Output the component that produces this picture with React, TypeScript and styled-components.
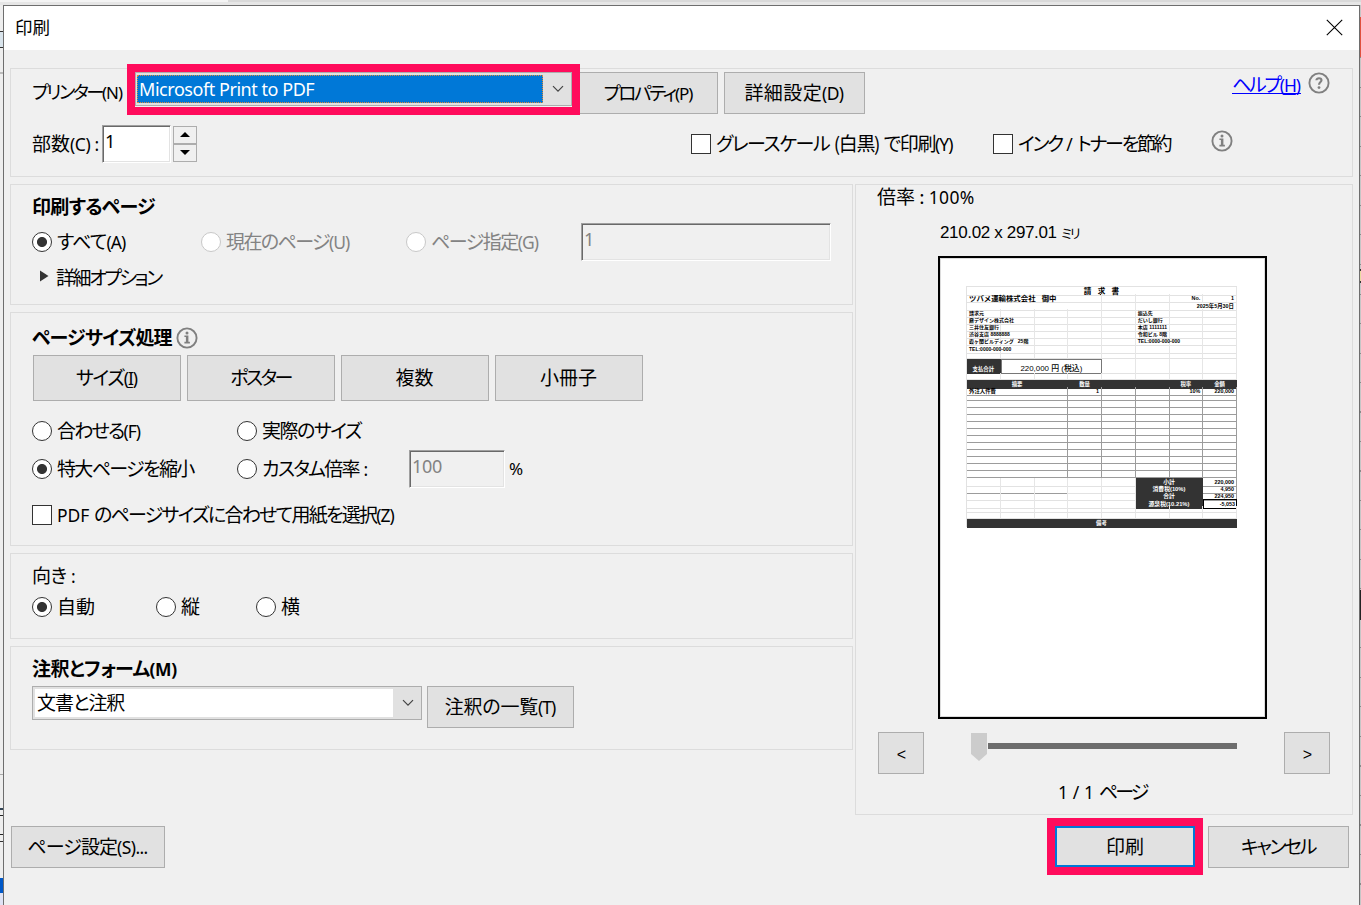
import React from "react";
import styled, { createGlobalStyle, css } from "styled-components";

const Global = createGlobalStyle`
  * { box-sizing: border-box; }
  body { margin: 0; background: #e9e9e9; overflow: hidden; }
  #root { height: 905px; }
`;

const ui = `"Noto Sans", "Noto Sans CJK JP", sans-serif`;
const cjk = `"Noto Sans CJK JP", "Noto Sans", sans-serif`;

const Screen = styled.div`
  width: 1361px;
  height: 905px;
  overflow: hidden;
  display: grid;
  grid-template-columns: 3px 1357px 1px;
  grid-template-rows: 5px 900px;
  background: #ededed;
  font: 19px/24px ${cjk};
  color: #000;
`;
const TopStrip = styled.div`
  grid-column: 1 / -1;
  background: linear-gradient(90deg, #f4f4f4 228px, #d9d9d9 228px);
  height: 5px;
  border-bottom: 3px solid #e6e6e6;
`;
const LeftStrip = styled.div`
  background: linear-gradient(
    #eee 26px, #333 26px 27px, #d9e4ec 27px 42px, #333 42px 43px, #eee 43px 67px, #bbb 67px 69px,
    #eee 69px 769px, #aaa 769px 770px, #eee 770px 803px, #345 803px 805px, #eee 805px 810px,
    #222 810px 811px, #eee 811px 829px, #222 829px 830px, #eee 830px 836px,
    #333 836px 837px, #eee 837px 873px, #0058c8 873px 888px, #dfe3f5 888px 899px
  );
`;
const RightStrip = styled.div`
  background:
    linear-gradient(transparent 12px, #e0503e 12px 52px, transparent 52px 264px, #333 264px 266px, #e8d9a0 266px 276px, #333 276px 278px, transparent 278px 585px, #222 585px 615px, transparent 615px),
    repeating-linear-gradient(#c6c6c6 0 23px, #8a8a8a 23px 24px, #c6c6c6 24px 29.5px);
`;
const Dialog = styled.section`
  border: 1px solid #6e6e6e;
  border-bottom: 0;
  background: #f0f0f0;
  display: flex;
  flex-direction: column;
`;
const TitleBar = styled.header`
  height: 44px;
  background: #fff;
  display: flex;
  align-items: center;
  justify-content: space-between;
  padding: 0 16px 1px 11px;
`;
const Body = styled.div`
  padding: 18px 6px 0;
`;
const Group = styled.section<{ $h: number }>`
  height: ${(p) => p.$h}px;
  border: 1px solid #dcdcdc;
  padding-left: 21px;
  margin-bottom: 7px;
`;
const Columns = styled.div`
  display: grid;
  grid-template-columns: 843px 498px;
  column-gap: 2px;
`;
const Row = styled.div<{ $h: number; $mt?: number }>`
  height: ${(p) => p.$h}px;
  margin-top: ${(p) => p.$mt ?? 0}px;
  display: flex;
  align-items: center;
`;
const Label = styled.span<{ $w?: number; $ls?: number; $bold?: boolean; $dim?: boolean; $size?: number }>`
  flex: none;
  width: ${(p) => (p.$w ? p.$w + "px" : "auto")};
  padding-bottom: 2px;
  white-space: pre;
  font-size: ${(p) => p.$size ?? 19}px;
  font-weight: ${(p) => (p.$bold ? 700 : 400)};
  font-family: ${cjk};
  font-feature-settings: "palt";
  letter-spacing: ${(p) => p.$ls ?? 0}px;
  color: ${(p) => (p.$dim ? "#838383" : "inherit")};
`;
const Latin = styled.span<{ $ls?: number }>`
  font-family: ${ui};
  font-size: 0.92em;
  letter-spacing: ${(p) => p.$ls ?? -1}px;
`;
const Button = styled.button<{ $w: number; $h?: number; $ml?: number }>`
  flex: none;
  width: ${(p) => p.$w}px;
  height: ${(p) => p.$h ?? 42}px;
  margin: 0 0 0 ${(p) => p.$ml ?? 0}px;
  padding: 0 1px 1px 0;
  border: 1px solid #adadad;
  border-radius: 0;
  background: #e1e1e1;
  color: #000;
  display: flex;
  align-items: center;
  justify-content: center;
`;
const Highlight = styled.div<{ $w: number; $h: number; $ml?: number }>`
  flex: none;
  width: ${(p) => p.$w}px;
  height: ${(p) => p.$h}px;
  margin-left: ${(p) => p.$ml ?? 0}px;
  border: 8px solid #ff0c5c;
  background: #f0f0f0;
  z-index: 1;
`;
const PrintButton = styled(Button)`
  padding: 0;
  border: 2px solid #0078d7;
`;
const Combo = styled.div<{ $w: number; $inset?: number }>`
  width: ${(p) => p.$w}px;
  height: 34px;
  flex: none;
  border: 1px solid #adadad;
  background: #e1e1e1;
  display: grid;
  grid-template-columns: 1fr 28px;
  padding: 2px 0 2px ${(p) => p.$inset ?? 2}px;
`;
const ComboValue = styled.div<{ $active?: boolean }>`
  display: flex;
  align-items: center;
  padding-left: 2px;
  background: #fff;
  ${(p) => p.$active && css`
    background: #0078d7;
    color: #fff;
    font: 18px/24px ${ui};
    letter-spacing: -0.45px;
    outline: 1px dotted #e08a3a;
    outline-offset: -1px;
  `}
`;
const Drop = styled.div`
  display: flex;
  align-items: center;
  justify-content: center;
  padding-left: 2px;
`;
const Field = styled.div<{ $w: number; $ml?: number; $off?: boolean }>`
  flex: none;
  width: ${(p) => p.$w}px;
  height: 38px;
  margin-left: ${(p) => p.$ml ?? 0}px;
  border: 1px solid;
  border-color: #a0a0a0 #fff #fff #a0a0a0;
  box-shadow: inset 1px 1px #696969, inset -1px -1px #e3e3e3;
  background: ${(p) => (p.$off ? "#f0f0f0" : "#fff")};
  color: ${(p) => (p.$off ? "#838383" : "#000")};
  padding: 3px 0 0 2px;
  font: 18px/24px ${ui};
  letter-spacing: -0.3px;
`;
const Spinner = styled.div`
  margin-left: 2px;
  width: 24px;
  height: 36px;
  display: grid;
  grid-template-rows: 18px 18px;
`;
const SpinButton = styled.div`
  border: 1px solid #adadad;
  background: #f0f0f0;
  display: flex;
  align-items: center;
  justify-content: center;
  padding: 0 1px 1px 0;
`;
const Radio = styled.span<{ $on?: boolean; $dim?: boolean }>`
  flex: none;
  width: 20px;
  height: 20px;
  margin-right: 5px;
  border-radius: 50%;
  border: 1px solid ${(p) => (p.$dim ? "#c8c8c8" : "#333")};
  background: ${(p) => (p.$on ? "radial-gradient(circle, #333 4.6px, #fff 5.4px)" : "#fff")};
`;
const Check = styled.span`
  flex: none;
  width: 20px;
  height: 20px;
  margin-right: 5px;
  border: 1px solid #333;
  background: #fff;
`;
const HelpLink = styled.a`
  color: #0000ff;
  border-bottom: 1px solid #0000ff;
  line-height: 24px;
  height: 22px;
  width: 69px;
  margin-right: 7px;
`;
const HelpRow = styled.div`
  display: flex;
  margin: 8px 22px 0 auto;
  align-self: flex-start;
`;
const Key = styled.u`
  text-decoration: underline;
  text-decoration-thickness: 1px;
  text-underline-offset: 2px;
`;
/* Pushes its content down so that it lines up with the tall combo box. */
const Lowered = styled.div`
  display: flex;
  align-items: center;
  padding-top: 6px;
`;
const Raised = styled.div`
  display: flex;
  padding: 0 0 6px;
  margin-left: -1px;
`;
const Options = styled.div`
  display: flex;
  align-items: center;
  height: 38px;
  margin-left: 494px;
`;
const Disclosure = styled.svg`
  margin: -4px 7px 0 7px;
`;
const Percent = styled.span`
  font: 17px/24px ${ui};
  margin-left: 4px;
`;
const TopRow = styled.div`
  display: flex;
  align-items: flex-start;
  margin-top: 5px;
`;
const FooterWrap = styled.div`
  margin-top: 7px;
`;
const Footer = styled.footer`
  display: flex;
  align-items: flex-start;
  height: 57px;
  margin-top: -4px;
  padding-left: 1px;
`;
const FooterSlot = styled.div`
  padding-top: 8px;
`;

const Preview = styled.section`
  height: 631px;
  border: 1px solid #dcdcdc;
`;
const Scale = styled.div`
  display: flex;
  align-items: center;
  margin: 0 0 0 21px;
  height: 24px;
`;
const PageSize = styled.div`
  font: 17px/20px "Liberation Sans", ${cjk};
  margin: 14px 0 0 84px;
  height: 20px;
  white-space: pre;
  letter-spacing: -0.35px;
`;
const Mm = styled.span`
  font-size: 13px;
  font-feature-settings: "palt";
  letter-spacing: -1.8px;
`;
const Paper = styled.div`
  width: 329px;
  height: 463px;
  margin: 13px 0 0 82px;
  border: 2px solid #000;
  box-shadow: inset 0 0 0 1px #dcdcdc;
  background: #fff;
  padding: 28px 0 0 27px;
`;
const Pager = styled.div`
  display: flex;
  height: 42px;
  margin: 13px 22px 0;
`;
const Slider = styled.div`
  display: flex;
  margin: 1px 47px 0;
  width: 266px;
`;
const Track = styled.div`
  width: 249px;
  height: 6px;
  margin: 10px 0 0 1px;
  background: #6d6d6d;
`;
const Angle = styled.span`
  font: 16px/20px "Liberation Sans", sans-serif;
  padding: 5px 0 0 2px;
`;
const Count = styled.div`
  display: flex;
  align-items: center;
  margin: 6px 0 0 202px;
  height: 24px;
`;

const Sheet = styled.div`
  width: 271px;
  margin-left: -1px;
  border-left: 1px solid #e2e2e2;
  border-top: 1px solid #e2e2e2;
  font: 700 5.4px/7px "Liberation Sans", ${cjk};
`;
const Line = styled.div<{ $h: number }>`
  height: ${(p) => p.$h}px;
  display: grid;
  grid-template-columns: repeat(8, 1fr);
`;
type Look = "plain" | "ruled" | "dark" | "box" | "strong" | "under";
const Cell = styled.div<{ $span: number; $look: Look; $align: string; $size?: number }>`
  grid-column: span ${(p) => p.$span};
  min-width: 0;
  height: 100%;
  display: flex;
  align-items: center;
  justify-content: ${(p) => p.$align};
  padding: 1px 2px 0;
  white-space: pre;
  font-size: ${(p) => p.$size ?? 5.4}px;
  border-right: 1px solid #e6e6e6;
  border-bottom: 1px solid #e2e2e2;
  ${(p) => p.$look === "ruled" && css`border-color: #9c9c9c;`}
  ${(p) => p.$look === "dark" && css`background: #333; border-color: #333; color: #fff;`}
  ${(p) => p.$look === "box" && css`border: 1px solid #777; padding-top: 4px; font-weight: 500;`}
  ${(p) => p.$look === "strong" && css`border: 1px solid #000; padding-right: 1px;`}
  ${(p) => p.$look === "under" && css`border-bottom-color: #9c9c9c;`}
`;
const TotalTag = styled.span`
  padding-top: 6px;
`;

type C = { t?: React.ReactNode; s?: number; k?: Look; a?: "flex-start" | "center" | "flex-end"; z?: number };
type L = { h: number; c: C[] };
const blank = (n: number, k: Look = "plain"): C[] => Array.from({ length: n }, () => ({ k }));
const address = (left: string, right: string, h = 7): L => ({
  h,
  c: [{ t: left, z: 5 }, ...blank(4), { t: right, z: 5 }, ...blank(2)],
});
const emptyItem: L = { h: 7, c: [{ s: 3, k: "ruled" }, ...blank(5, "ruled")] };
const total = (name: string, value: string, left: Look = "plain", k: Look = "ruled"): L => ({
  h: 7,
  c: [...blank(3, left), ...blank(2), { t: name, s: 2, k: "dark", a: "center", z: 5.8 }, { t: value, k, a: "flex-end" }],
});
const invoice: L[] = [
  { h: 7, c: [{ t: "請   求   書", s: 8, a: "center", z: 7.6 }] },
  { h: 8, c: [{ t: "ツバメ運輸株式会社   御中", s: 4, z: 7.4 }, ...blank(2), { t: "No.", a: "flex-end" }, { t: "1", a: "flex-end" }] },
  { h: 7, c: [{ s: 4 }, ...blank(2), { t: "2025年5月30日", s: 2, a: "flex-end" }] },
  address("請求元", "振込先"),
  address("鼎デザイン株式会社", "だいし銀行"),
  address("三井住友銀行", "本店 1111111"),
  address("渋谷支店 8888888", "令和ビル 8階"),
  address("霞ヶ関ビルディング   25階", "TEL:0000-000-000", 8),
  address("TEL:0000-000-000", ""),
  { h: 7, c: blank(8) },
  { h: 14, c: [{ t: <TotalTag>支払合計</TotalTag>, k: "dark", a: "center" }, { t: "220,000 円 (税込)", s: 3, k: "box", a: "center", z: 7.9 }, ...blank(4)] },
  { h: 7, c: blank(8) },
  { h: 7, c: [{ t: "摘要", s: 3, k: "dark", a: "center" }, { t: "数量", k: "dark", a: "center" }, ...blank(2, "dark"), { t: "税率", k: "dark", a: "center" }, { t: "金額", k: "dark", a: "center" }] },
  { h: 7, c: [{ t: "外注人件費", s: 3, k: "ruled" }, { t: "1", k: "ruled", a: "flex-end" }, ...blank(2, "ruled"), { t: "10%", k: "ruled", a: "flex-end" }, { t: "220,000", k: "ruled", a: "flex-end" }] },
  ...Array.from({ length: 12 }, () => emptyItem),
  total("小計", "220,000"),
  total("消費税(10%)", "4,950", "under"),
  total("合計", "224,950"),
  total("源泉税(10.21%)", "-5,053", "plain", "strong"),
  { h: 7, c: blank(8) },
  { h: 6, c: blank(8) },
  { h: 8, c: [{ t: "備考", s: 8, k: "dark", a: "center" }] },
];

const Invoice = () => (
  <Sheet>
    {invoice.map((l, i) => (
      <Line key={i} $h={l.h}>
        {l.c.map((c, j) => (
          <Cell key={j} $span={c.s ?? 1} $look={c.k ?? "plain"} $align={c.a ?? "flex-start"} $size={c.z}>
            {c.t}
          </Cell>
        ))}
      </Line>
    ))}
  </Sheet>
);

const Chevron = () => (
  <svg width="12" height="8" viewBox="0 0 12 8" fill="none" stroke="#444" strokeWidth="1.2">
    <path d="M1 1.2 6 6.2 11 1.2" />
  </svg>
);
const InfoIcon = () => (
  <svg width="22" height="22" viewBox="0 0 22 22">
    <circle cx="11" cy="11" r="9.6" fill="none" stroke="#808080" strokeWidth="1.9" />
    <circle cx="11" cy="6" r="1.5" fill="#808080" />
    <path d="M8.4 8.5H12.4V14.8H13.9V16.4H8.4V14.8H9.9V10H8.4Z" fill="#808080" />
  </svg>
);
const HelpIcon = () => (
  <svg width="22" height="22" viewBox="0 0 22 22">
    <circle cx="11" cy="11" r="9.6" fill="none" stroke="#808080" strokeWidth="1.9" />
    <path d="M8.4 8.3C8.4 6.9 9.5 6.3 11 6.3S13.5 7 13.5 8.3C13.5 10 11 10.1 11 12.8" fill="none" stroke="#808080" strokeWidth="2.1" />
    <circle cx="11" cy="15.6" r="1.4" fill="#808080" />
  </svg>
);

export default function App() {
  return (
    <>
      <Global />
      <Screen>
        <TopStrip />
        <LeftStrip />
        <Dialog>
          <TitleBar>
            <Label $size={17.5}>印刷</Label>
            <svg width="17" height="17" viewBox="0 0 17 17" stroke="#000" strokeWidth="1.1">
              <path d="M.8.8 16.2 16.2M16.2.8.8 16.2" />
            </svg>
          </TitleBar>
          <Body>
            <Group $h={109}>
              <Row $h={51} $mt={-5}>
                <Lowered><Label $w={95} $ls={-2.5} $size={18.4}>プリンター<Latin>(N)</Latin></Label></Lowered>
                <Highlight $w={453} $h={51}>
                  <Combo $w={437} $inset={1}>
                    <ComboValue $active>Microsoft Print to PDF</ComboValue>
                    <Drop><Chevron /></Drop>
                  </Combo>
                </Highlight>
                <Lowered>
                  <Button $w={139} $ml={-1}><Label $ls={-2.3} $size={18.6}>プロパティ<Latin>(P)</Latin></Label></Button>
                  <Button $w={141} $ml={6}><Label $ls={0.4}>詳細設定<Latin $ls={-0.6}>(D)</Latin></Label></Button>
                </Lowered>
                <HelpRow>
                  <HelpLink><Label $ls={-2.3}>ヘルプ<Latin>(<Key>H</Key>)</Latin></Label></HelpLink>
                  <HelpIcon />
                </HelpRow>
              </Row>
              <Row $h={38} $mt={10}>
                <Label $w={70}>部数<Latin $ls={-0.4}>(C) :</Latin></Label>
                <Field $w={69}>1</Field>
                <Spinner>
                  <SpinButton><svg width="10" height="5"><path d="M0 5 5 0 10 5Z" /></svg></SpinButton>
                  <SpinButton><svg width="10" height="5"><path d="M0 0 5 5 10 0Z" /></svg></SpinButton>
                </Spinner>
                <Options>
                  <Check /><Label $w={277} $ls={-1.4}>グレースケール<Latin $ls={0}> </Latin>(白黒)<Latin $ls={0}> </Latin>で印刷<Latin>(Y)</Latin></Label>
                  <Check /><Label $w={194} $ls={-2.3}>インク<Latin $ls={-0.1}> / </Latin>トナーを節約</Label>
                  <Raised><InfoIcon /></Raised>
                </Options>
              </Row>
            </Group>
            <Columns>
              <div>
                <Group $h={121}>
                  <Row $h={24} $mt={10}><Label $bold $ls={-0.7}>印刷するページ</Label></Row>
                  <Row $h={38} $mt={4}>
                    <Radio $on /><Label $w={144} $ls={-0.8}>すべて<Latin>(A)</Latin></Label>
                    <Radio $dim /><Label $w={180} $ls={-1.6} $dim>現在のページ<Latin>(U)</Latin></Label>
                    <Radio $dim /><Label $w={150} $ls={-1.5} $dim>ページ指定<Latin>(G)</Latin></Label>
                    <Field $w={250} $off>1</Field>
                  </Row>
                  <Row $h={24} $mt={5}>
                    <Disclosure width="10" height="12"><path d="M1 .5 9.5 6 1 11.5Z" fill="#333" /></Disclosure>
                    <Label $ls={-2.4}>詳細オプション</Label>
                  </Row>
                </Group>
                <Group $h={234}>
                  <Row $h={24} $mt={13}><Label $bold $w={144} $ls={-0.8}>ページサイズ処理</Label><InfoIcon /></Row>
                  <Row $h={46} $mt={5}>
                    <Button $w={148} $h={46} $ml={1}><Label $ls={-1.3}>サイズ<Latin>(<Key>I</Key>)</Latin></Label></Button>
                    <Button $w={148} $h={46} $ml={6}><Label $ls={-2.6}>ポスター</Label></Button>
                    <Button $w={148} $h={46} $ml={6}><Label>複数</Label></Button>
                    <Button $w={148} $h={46} $ml={6}><Label>小冊子</Label></Button>
                  </Row>
                  <Row $h={38} $mt={11}>
                    <Radio /><Label $w={180} $ls={-1.75}>合わせる<Latin>(F)</Latin></Label>
                    <Radio /><Label $ls={-1.5}>実際のサイズ</Label>
                  </Row>
                  <Row $h={38}>
                    <Radio $on /><Label $w={180} $ls={-1.65}>特大ページを縮小</Label>
                    <Radio /><Label $w={147} $ls={-1.7}>カスタム倍率<Latin $ls={0}> :</Latin></Label>
                    <Field $w={96} $off>100</Field>
                    <Percent>%</Percent>
                  </Row>
                  <Row $h={24} $mt={15}>
                    <Check /><Label $ls={-1.75}><Latin $ls={0}>PDF </Latin>のページサイズに合わせて用紙を選択<Latin>(Z)</Latin></Label>
                  </Row>
                </Group>
                <Group $h={86}>
                  <Row $h={24} $mt={10}><Label $ls={-0.6}>向き<Latin $ls={0}> :</Latin></Label></Row>
                  <Row $h={24} $mt={7}>
                    <Radio $on /><Label $w={99}>自動</Label>
                    <Radio /><Label $w={75}>縦</Label>
                    <Radio /><Label>横</Label>
                  </Row>
                </Group>
                <Group $h={104}>
                  <Row $h={24} $mt={10}><Label $bold $ls={-0.6}>注釈とフォーム<Latin $ls={-0.3}>(M)</Latin></Label></Row>
                  <TopRow>
                    <Combo $w={390}>
                      <ComboValue><Label $ls={-1.1}>文書と注釈</Label></ComboValue>
                      <Drop><Chevron /></Drop>
                    </Combo>
                    <Button $w={147} $ml={5}><Label $ls={-0.2}>注釈の一覧<Latin>(T)</Latin></Label></Button>
                  </TopRow>
                </Group>
              </div>
              <Preview>
                <Scale><Label>倍率 : <Latin $ls={0.3}>100%</Latin></Label></Scale>
                <PageSize>210.02 x 297.01 <Mm>ミリ</Mm></PageSize>
                <Paper><Invoice /></Paper>
                <Pager>
                  <Button $w={46}><Angle>&lt;</Angle></Button>
                  <Slider>
                    <svg width="16" height="28"><path d="M0 0H16V21L8 28 0 21Z" fill="#ccc" /></svg>
                    <Track />
                  </Slider>
                  <Button $w={46}><Angle>&gt;</Angle></Button>
                </Pager>
                <Count><Label $ls={-2.8}><Latin $ls={0.1}>1 / 1 </Latin>ページ</Label></Count>
              </Preview>
            </Columns>
            <FooterWrap>
              <Footer>
                <FooterSlot><Button $w={154}><Label $ls={-0.9}>ページ設定<Latin $ls={-0.6}>(S)...</Latin></Label></Button></FooterSlot>
                <Highlight $w={156} $h={57} $ml={882}>
                  <PrintButton $w={140} $h={41}><Label>印刷</Label></PrintButton>
                </Highlight>
                <FooterSlot><Button $w={141} $ml={5}><Label $ls={-2.4}>キャンセル</Label></Button></FooterSlot>
              </Footer>
            </FooterWrap>
          </Body>
        </Dialog>
        <RightStrip />
      </Screen>
    </>
  );
}
